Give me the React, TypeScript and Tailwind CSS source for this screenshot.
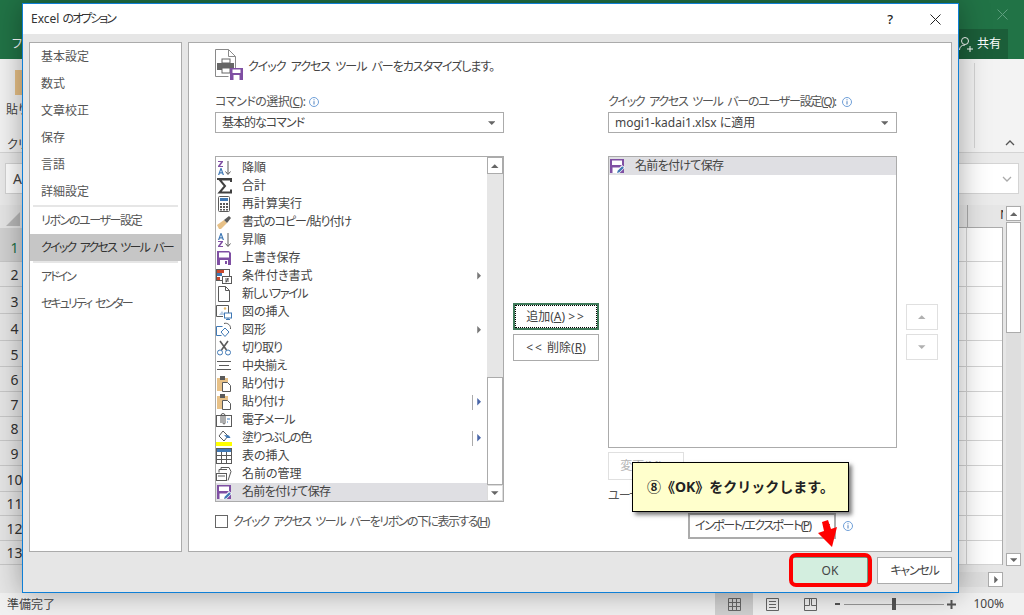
import type { ReactNode } from "react";

const PURPLE = "#7f4fa3";
const BLUE = "#3f78b5";
const GREY = "#5a5a5a";

function Ico({ children, size = 16 }: { children: ReactNode; size?: number }) {
  return (
    <svg viewBox="0 0 16 16" width={size} height={size} className="shrink-0 block" fill="none">
      {children}
    </svg>
  );
}

function SaveAsIcon() {
  return (
    <Ico>
      <rect x="1" y="1" width="14" height="14" fill={PURPLE} />
      <rect x="3" y="2.500" width="10" height="4.500" fill="#fff" />
      <rect x="3.500" y="9.500" width="7" height="5.500" fill="#fff" />
      <path d="M6.500 15.500l1-3 5.500-5.500 3 2.500-5.500 5.500z" fill="#fff" />
      <path d="M8 15l.7-2.200 4.500-4.500 1.700 1.400-4.500 4.500z" fill={BLUE} />
    </Ico>
  );
}

const ICONS: Record<string, ReactNode> = {
  desc: (
    <Ico>
      <path d="M2 1h5v1L4 6h3v1H2V6l3-4H2z" fill={PURPLE} />
      <path d="M4.500 8L2 15h1.300l.5-1.500h2.400l.5 1.500H8L5.500 8zM4.200 12.300L5 10l.8 2.300z" fill={BLUE} />
      <path d="M12 1v13M9.500 11.500L12 14.500l2.500-3" stroke={GREY} />
    </Ico>
  ),
  sum: (
    <Ico>
      <path d="M1 1h14v3M14 1.500H3.500L9 8l-5.500 6.500H15v-3" stroke="#404040" strokeWidth="2" />
    </Ico>
  ),
  calc: (
    <Ico>
      <rect x="2.500" y=".5" width="11" height="15" rx="1" fill="#fff" stroke={GREY} />
      <rect x="4" y="2" width="8" height="3" fill={BLUE} />
      <path d="M4 7h2v2H4zM7 7h2v2H7zM10 7h2v2h-2zM4 10h2v2H4zM7 10h2v2H7zM10 10h2v2h-2zM4 13h2v1.500H4zM7 13h2v1.500H7zM10 13h2v1.500h-2z" fill={GREY} />
    </Ico>
  ),
  brush: (
    <Ico>
      <path d="M1 11l7-5 3 3-6 6H3z" fill="#e8c187" />
      <path d="M8 6l5-4 2 2-4 5z" fill={GREY} />
    </Ico>
  ),
  asc: (
    <Ico>
      <path d="M4.500 1L2 8h1.300l.5-1.500h2.400L6.700 8H8L5.500 1zM4.200 5.300L5 3l.8 2.300z" fill={BLUE} />
      <path d="M2 9h5v1l-3 4h3v1H2v-1l3-4H2z" fill={PURPLE} />
      <path d="M12 1v13M9.500 11.500L12 14.500l2.500-3" stroke={GREY} />
    </Ico>
  ),
  save: (
    <Ico>
      <path d="M1 1h12l2 2v12H1z" fill={PURPLE} />
      <rect x="3" y="2.500" width="10" height="5" fill="#fff" />
      <rect x="4" y="10" width="8" height="5" fill="#fff" />
      <rect x="9" y="11" width="2" height="3" fill={PURPLE} />
    </Ico>
  ),
  cond: (
    <Ico>
      <rect x=".5" y="1.500" width="13" height="11" fill="#fff" stroke={GREY} />
      <rect x="1" y="2" width="7" height="3" fill="#c9482c" />
      <rect x="1" y="5" width="5" height="3" fill={BLUE} />
      <rect x="1" y="9" width="3" height="3" fill="#c9482c" />
      <rect x="6.500" y="8.500" width="9" height="7" fill="#fff" stroke={GREY} />
      <path d="M9 11h4M9 13h4M12 10l-2 4.500" stroke="#333" strokeWidth=".8" />
    </Ico>
  ),
  file: (
    <Ico>
      <path d="M2.500.5h7l4 4v11h-11z" fill="#fff" stroke={GREY} />
      <path d="M9.500.5v4h4" stroke={GREY} />
    </Ico>
  ),
  picture: (
    <Ico>
      <path d="M.5 1.500h12v8M7 12.500H.5v-11" stroke={GREY} />
      <path d="M3 11l3-4 3 4z" fill="#b7cbe3" />
      <circle cx="9" cy="4.500" r="1.200" fill="#e8b96a" />
      <rect x="8.500" y="9" width="7" height="5" fill="#fff" stroke={BLUE} />
      <path d="M10 15.500h4M12 14v1.500" stroke={BLUE} />
    </Ico>
  ),
  shape: (
    <Ico>
      <path d="M.5 4.500h6M.5 4.500v9h5" stroke={BLUE} />
      <path d="M5 10l4-4 4 4-4 4.500z" fill="#fff" stroke={BLUE} />
      <path d="M8 1.500a5 5 0 0 1 6.500 5.500" stroke={GREY} />
    </Ico>
  ),
  cut: (
    <Ico>
      <path d="M4 1l6.500 9M12 1L5.500 10" stroke={GREY} strokeWidth="1.600" />
      <circle cx="4" cy="12.500" r="2.500" stroke={BLUE} />
      <circle cx="12" cy="12.500" r="2.500" stroke={BLUE} />
    </Ico>
  ),
  center: (
    <Ico>
      <path d="M1 3.500h14M3 7.500h10M1 11.500h14" stroke={GREY} />
    </Ico>
  ),
  paste: (
    <Ico>
      <rect x="1" y="2" width="11" height="13" fill="#e8c187" />
      <rect x="4" y="0" width="5" height="4" fill={GREY} />
      <path d="M6.500 6.500h5l3 3v6h-8z" fill="#fff" stroke={GREY} />
    </Ico>
  ),
  mail: (
    <Ico>
      <rect x=".5" y="3.500" width="15" height="11" fill="#fff" stroke={GREY} />
      <path d="M5 11V3.500a2 2 0 0 1 4 0V11a1 1 0 0 1-2 0V4" stroke={GREY} />
      <path d="M11 7h3M11 10h1" stroke={BLUE} />
    </Ico>
  ),
  fill: (
    <Ico>
      <path d="M7 1l5 5-4 5-5-5z" fill="#fff" stroke={GREY} />
      <path d="M8 5l5 .5 1.500 2.500H11z" fill={BLUE} />
      <rect x="0" y="12" width="16" height="4" fill="#ffff00" />
    </Ico>
  ),
  table: (
    <Ico>
      <rect x=".5" y=".5" width="15" height="15" fill="#fff" stroke={GREY} />
      <rect x="1" y="1" width="14" height="3" fill={BLUE} />
      <path d="M1 7.500h14M1 11.500h14M5.500 4v11M10.500 4v11" stroke={GREY} />
    </Ico>
  ),
  names: (
    <Ico>
      <path d="M3 6.500V3.500h8M5 3.500V1.500h8l2 4-3 9" stroke={GREY} />
      <rect x=".5" y="7.500" width="10" height="7" fill="#fff" stroke={GREY} />
      <path d="M2 10h7" stroke={GREY} />
    </Ico>
  ),
  saveas: <SaveAsIcon />,
};

// tr: the reference's kana run narrower than Noto's, so each label gets its own tracking
const COMMANDS: { label: string; icon: string; tr?: string; arrow?: "plain" | "split"; active?: boolean }[] = [
  { label: "降順", icon: "desc" },
  { label: "合計", icon: "sum" },
  { label: "再計算実行", icon: "calc" },
  { label: "書式のコピー/貼り付け", icon: "brush", tr: "tracking-[-1px]" },
  { label: "昇順", icon: "asc" },
  { label: "上書き保存", icon: "save" },
  { label: "条件付き書式", icon: "cond", arrow: "plain" },
  { label: "新しいファイル", icon: "file", tr: "tracking-[-1.4px]" },
  { label: "図の挿入", icon: "picture" },
  { label: "図形", icon: "shape", arrow: "plain" },
  { label: "切り取り", icon: "cut", tr: "tracking-[-1px]" },
  { label: "中央揃え", icon: "center", tr: "tracking-[-0.5px]" },
  { label: "貼り付け", icon: "paste", tr: "tracking-[-0.8px]" },
  { label: "貼り付け", icon: "paste", tr: "tracking-[-0.8px]", arrow: "split" },
  { label: "電子メール", icon: "mail", tr: "tracking-[-1px]" },
  { label: "塗りつぶしの色", icon: "fill", tr: "tracking-[-1.4px]", arrow: "split" },
  { label: "表の挿入", icon: "table" },
  { label: "名前の管理", icon: "names" },
  { label: "名前を付けて保存", icon: "saveas", tr: "tracking-[-0.7px]", active: true },
];

const ROW_NUMS = [
  [1, "h-[34px]"],
  [2, "h-[25px]"],
  [3, "h-[27px]"],
  [4, "h-[27px]"],
  [5, "h-[26px]"],
  [6, "h-[25px]"],
  [7, "h-[25px]"],
  [8, "h-[24px]"],
  [9, "h-[25px]"],
  [10, "h-[26px]"],
  [11, "h-[24px]"],
  [12, "h-[25px]"],
  [13, "h-[24px]"],
] as const;

const NAV_TOP = ["基本設定", "数式", "文章校正", "保存", "言語", "詳細設定"];

function Tri({ dir, color, size = 3 }: { dir: "up" | "down" | "right"; color: string; size?: number }) {
  const pts = dir === "up" ? "0,8 5,3 10,8" : dir === "down" ? "0,3 5,8 10,3" : "3,0 8,5 3,10";
  return (
    <svg viewBox="0 0 10 10" width={size * 2.5} height={size * 2.5} className="block shrink-0">
      <polygon points={pts} fill={color} />
    </svg>
  );
}

function Info() {
  return (
    <svg viewBox="0 0 10 10" width="10" height="10" className="block shrink-0">
      <circle cx="5" cy="5" r="4.500" fill="none" stroke="#6f9fd8" />
      <path d="M5 4.200v3.300M5 2.300v1" stroke="#4c7fbd" />
    </svg>
  );
}

function Select({ text, tr = "" }: { text: string; tr?: string }) {
  return (
    <div className="h-[21px] border border-[#ababab] bg-white flex items-center pl-[6px] pr-[8px] justify-between text-[#444]">
      <span className={tr}>{text}</span>
      <Tri dir="down" color="#666" />
    </div>
  );
}

function ScrollBtn({ dir, className = "" }: { dir: "up" | "down" | "right"; className?: string }) {
  return (
    <div className={`flex items-center justify-center bg-white border border-[#ababab] ${className}`}>
      <Tri dir={dir} color="#666" />
    </div>
  );
}

function CommandList() {
  return (
    <div className="h-[346px] border border-[#ababab] bg-white flex">
      <div className="flex-1 flex flex-col min-w-0 pt-[2px]">
        {COMMANDS.map((c, i) => (
          <div key={i} className={`flex-1 flex items-center ${c.active ? "bg-[#dfdfe3]" : ""}`}>
            <span className="w-[26px] shrink-0">{ICONS[c.icon]}</span>
            <span className={`flex-1 text-[#444] ${c.tr ?? ""}`}>{c.label}</span>
            {c.arrow === "split" && <span className="w-px h-[15px] bg-[#ababab] mr-[2px]" />}
            {c.arrow && (
              <span className="mr-[5px]">
                <Tri dir="right" color={c.arrow === "split" ? "#4a66a8" : "#777"} />
              </span>
            )}
            {!c.arrow && <span className="w-[14px]" />}
          </div>
        ))}
      </div>
      <div className="w-[16px] bg-[#e6e6e6] flex flex-col">
        <ScrollBtn dir="up" className="h-[17px]" />
        <div className="h-[203px]" />
        <div className="flex-1 bg-white border border-[#ababab]" />
        <ScrollBtn dir="down" className="h-[16px] border-[#dcdcdc]" />
      </div>
    </div>
  );
}

function HeaderIcon() {
  return (
    <svg viewBox="0 0 28 31" width="28" height="31" className="block shrink-0" fill="none">
      <path d="M.5.500h13l7 7v15M.5.500v27h13" stroke="#8a8a8a" />
      <path d="M13.500.500v7h7" stroke="#8a8a8a" />
      <rect x="7" y="10" width="8" height="4" fill="#fff" stroke="#666" />
      <rect x="2" y="14" width="17" height="7" fill="#666" />
      <rect x="7" y="19" width="8" height="5" fill="#fff" stroke="#666" />
      <rect x="15" y="19" width="13" height="12" fill={PURPLE} />
      <rect x="17.500" y="20.500" width="8" height="3.500" fill="#fff" />
      <rect x="18.500" y="26" width="6" height="5" fill="#fff" />
    </svg>
  );
}

function Excel() {
  return (
    <div className="h-full flex flex-col text-[#444]">
      <div className="h-[59px] bg-[#217346] text-white flex flex-col">
        <div className="h-[29px] flex justify-end items-center pr-[16px]">
          <svg width="11" height="11" viewBox="0 0 11 11">
            <path d="M.5.500l10 10M10.500.500l-10 10" stroke="#5f9f7f" />
          </svg>
        </div>
        <div className="h-[30px] flex items-center pl-[12px]">
          <span>ファイル</span>
          <div className="ml-auto mr-[16px] w-[50px] h-full bg-[#1b5e39] flex items-center pl-[1px] gap-[4px]">
            <svg width="14" height="16" viewBox="0 0 14 16" fill="none" stroke="#fff" className="shrink-0">
              <circle cx="6" cy="5" r="3.500" />
              <path d="M.5 14c0-3 2-5 5.500-5M8 13h6M11 10v6" />
            </svg>
            <span>共有</span>
          </div>
        </div>
      </div>

      <div className="h-[94px] bg-[#f3f3f3] border-b border-[#d4d4d4] flex justify-between pl-[6px] pr-[9px]">
        <div className="flex flex-col">
          <div className="mt-[11px] ml-[9px] w-[20px] h-[25px] bg-[#e8c187]" />
          <span className="mt-[9px]">貼り付け</span>
          <span className="mt-[23px] ml-px">クリップボード</span>
        </div>
        <div className="flex items-end gap-[30px] pb-[4px]">
          <div className="w-px h-[85px] bg-[#d4d4d4]" />
          <svg width="10" height="6" viewBox="0 0 10 6" fill="none" className="mb-[2px]">
            <path d="M1 5l4-4 4 4" stroke="#555" strokeWidth="1.300" />
          </svg>
        </div>
      </div>

      <div className="h-[52px] bg-[#ebebeb] pl-[5px] pr-[5px] pt-[10px]">
        <div className="h-[31px] bg-white border border-[#d4d4d4] flex items-center justify-between pl-[7px] pr-[6px]">
          <span className="text-[14px]">A</span>
          <svg width="10" height="6" viewBox="0 0 10 6" fill="none">
            <path d="M1 1l4 4 4-4" stroke="#aaa" strokeWidth="1.300" />
          </svg>
        </div>
      </div>

      <div className="flex-1 flex min-h-0 bg-[#e6e6e6]">
        <div className="w-[22px] shrink-0 flex flex-col text-[14px] text-[#333]">
          <div className="h-[23px] flex items-end justify-end p-[2px]">
            <svg width="14" height="14" viewBox="0 0 14 14">
              <polygon points="14,0 14,14 0,14" fill="#b9b9b9" />
            </svg>
          </div>
          {ROW_NUMS.map(([n, h]) => (
            <div
              key={n}
              className={`${h} border-b border-[#c8c8c8] flex items-end justify-center pl-[7px] leading-none ${n === 1 ? "pb-[6px] bg-[#d2d2d2] text-[#217346]" : "pb-[4px]"}`}
            >
              {n}
            </div>
          ))}
        </div>

        <div className="flex-1 flex flex-col min-w-0">
          <div className="h-[23px] flex border-b border-[#ababab]">
            <div className="flex-1 border-r border-[#ababab]" />
            <div className="w-[35px] flex justify-end items-center overflow-hidden pb-[4px] text-[13px] text-[#333]">
              <span className="translate-x-[7px]">N</span>
            </div>
          </div>
          <div className="border-r border-[#ababab] bg-white">
            {ROW_NUMS.map(([n, h]) => (
              <div key={n} className={`${h} flex border-b border-[#d4d4d4]`}>
                <div className="flex-1 border-r border-[#d4d4d4]" />
                <div className="w-[35px]" />
              </div>
            ))}
          </div>
          <div className="mt-[7px] h-[15px] bg-[#dedede] flex justify-end">
            <ScrollBtn dir="right" className="w-[15px]" />
          </div>
        </div>

        <div className="w-[21px] shrink-0 pl-[3px] pr-[3px] pt-[1px] flex flex-col">
          <ScrollBtn dir="up" className="h-[15px]" />
          <div className="h-[111px] bg-white border border-[#ababab] mt-px" />
          <div className="h-[220px] bg-[#dedede]" />
          <ScrollBtn dir="down" className="h-[13px]" />
        </div>
      </div>

      <div className="h-[22px] bg-[#f1f1f1] flex items-center pl-[7px] text-[#444]">
        <span className="pt-[2px]">準備完了</span>
        <div className="ml-auto h-full flex items-center pr-[20px]">
          <div className="w-[38px] h-full bg-[#d0d0d0] flex items-center justify-center">
            <svg width="13" height="13" viewBox="0 0 13 13" fill="none" stroke="#666">
              <path d="M.5.500h12v12H.5zM4.500.500v12M8.500.500v12M.5 4.500h12M.5 8.500h12" />
            </svg>
          </div>
          <div className="w-[38px] flex justify-center">
            <svg width="13" height="13" viewBox="0 0 13 13" fill="none" stroke="#666">
              <path d="M.5.500h12v12H.5zM3 3.500h7M3 6.500h7M3 9.500h7" />
            </svg>
          </div>
          <div className="w-[38px] flex justify-center">
            <svg width="13" height="13" viewBox="0 0 13 13" fill="none" stroke="#666">
              <path d="M.5.500h12v12H.5zM.5 7.500h5v-7M7.500.500v7h5" />
            </svg>
          </div>
          <div className="w-[5px] h-[2px] bg-[#555] ml-[6px]" />
          <div className="w-[100px] h-px bg-[#999] ml-[4px] mr-[3px] flex items-center justify-center">
            <div className="w-[4px] h-[12px] bg-[#555] shrink-0" />
          </div>
          <svg width="9" height="9" viewBox="0 0 9 9" stroke="#555" strokeWidth="2" className="mr-[17px]">
            <path d="M0 4.500h9M4.500 0v9" />
          </svg>
          <span>100%</span>
        </div>
      </div>
    </div>
  );
}

function Dialog() {
  return (
    <div className="absolute left-[22px] top-[3px] w-[937px] h-[590px] border border-[#0f7fd6] bg-[#e6e6e6] flex flex-col shadow-[0_0_28px_rgba(0,0,0,0.35)]">
      <div className="h-[30px] shrink-0 bg-white flex items-center pl-[8px] text-[#333]">
        <span>
          Excel <span className="tracking-[-2px]">のオプション</span>
        </span>
        <span className="ml-auto mr-[37px] text-[13px] font-medium text-[#222]">?</span>
        <svg width="11" height="11" viewBox="0 0 11 11" className="mr-[17px]">
          <path d="M.5.500l10 10M10.500.500l-10 10" stroke="#222" />
        </svg>
      </div>

      <div className="flex-1 flex gap-[6px] px-[6px] pt-[8px] min-h-0">
        <div className="w-[153px] shrink-0 border border-[#ababab] bg-white flex flex-col text-[#555]">
          {NAV_TOP.map((t) => (
            <div key={t} className="h-[27px] flex items-center pl-[11px]">{t}</div>
          ))}
          <div className="h-[2px] bg-[#e6e6e6] mx-[3px]" />
          <div className="h-[27px] flex items-center pl-[11px] tracking-[-1.4px]">リボンのユーザー設定</div>
          <div className="h-[27px] flex items-center pl-[11px] bg-[#c6c6c6] text-[#333] tracking-[-1.8px] [word-spacing:3px]">クイック アクセス ツール バー</div>
          <div className="h-[2px] bg-[#e6e6e6] mx-[3px]" />
          <div className="h-[26px] pt-[2px] flex items-center pl-[11px] tracking-[-2px]">アドイン</div>
          <div className="h-[27px] pt-[2px] flex items-center pl-[11px] tracking-[-2px] [word-spacing:3px]">セキュリティ センター</div>
        </div>

        <div className="flex-1 border border-[#ababab] bg-white flex flex-col pl-[26px] pt-[6px] text-[#555]">
          <div className="h-[43px] flex items-start gap-[5px]">
            <HeaderIcon />
            <span className="mt-[12px] text-[#444] tracking-[-1px] [word-spacing:3px]">クイック アクセス ツール バーをカスタマイズします。</span>
          </div>

          <div className="flex">
            <div className="w-[289px] flex flex-col">
              <div className="h-[20px] flex items-center gap-[4px]">
                <span className="tracking-[-0.5px]">コマンドの選択(<u>C</u>):</span>
                <Info />
              </div>
              <Select text="基本的なコマンド" tr="tracking-[-1px]" />
              <div className="h-[23px]" />
              <CommandList />
              <div className="mt-[13px] flex items-center gap-[5px]">
                <div className="w-[13px] h-[13px] border border-[#666] bg-white" />
                <span className="tracking-[-1.5px] [word-spacing:3px]">クイック アクセス ツール バーをリボンの下に表示する(<u>H</u>)</span>
              </div>
            </div>

            <div className="w-[86px] mx-[9px] pt-[211px] flex flex-col gap-[4px] text-[#444]">
              <div className="h-[27px] border-2 border-[#3f7a5a] flex items-center justify-center outline-1 outline-dotted outline-black -outline-offset-3">
                追加(<u>A</u>)&nbsp;<span className="tracking-[2px]">&gt;&gt;</span>
              </div>
              <div className="h-[27px] border border-[#ababab] flex items-center justify-center">
                <span className="tracking-[2px]">&lt;&lt;</span>&nbsp;削除(<u>R</u>)
              </div>
            </div>

            <div className="w-[289px] flex flex-col">
              <div className="h-[20px] flex items-center gap-[6px]">
                <span className="tracking-[-1.3px] [word-spacing:3px]">クイック アクセス ツール バーのユーザー設定(<u>Q</u>):</span>
                <Info />
              </div>
              <Select text="mogi1-kadai1.xlsx に適用" />
              <div className="h-[23px]" />
              <div className="h-[292px] border border-[#ababab] bg-white">
                <div className="h-[18px] bg-[#dfdfe3] flex items-center gap-[10px] text-[#444]">
                  <SaveAsIcon />
                  <span className="tracking-[-0.7px]">名前を付けて保存</span>
                </div>
              </div>
              <div className="mt-[4px] w-[76px] h-[28px] border border-[#e0e0e0] flex items-center justify-center text-[#b5b5b5]">
                変更(M)...
              </div>
              <div className="mt-[8px] h-[16px] flex items-center tracking-[-1px]">ユーザー設定:</div>
              <div className="mt-[9px] flex items-center">
                <div className="ml-[80px] w-[148px] h-[26px] border-2 border-[#ababab] flex items-center justify-between pl-[5px] pr-[4px] text-[#444]">
                  <span className="tracking-[-1.5px]">インポート/エクスポート(<u>P</u>)</span>
                  <Tri dir="down" color="#444" />
                </div>
                <span className="ml-[7px]">
                  <Info />
                </span>
              </div>
            </div>

            <div className="w-[32px] ml-[9px] pt-[212px] flex flex-col gap-[4px]">
              <div className="h-[26px] border border-[#e0e0e0] flex items-center justify-center">
                <Tri dir="up" color="#b0b0b0" />
              </div>
              <div className="h-[26px] border border-[#e0e0e0] flex items-center justify-center">
                <Tri dir="down" color="#b0b0b0" />
              </div>
            </div>
          </div>
        </div>
      </div>

      <div className="h-[40px] shrink-0 flex justify-end items-start gap-[9px] px-[6px] pt-[5px] text-[#444]">
        <div className="w-[76px] h-[27px] bg-[#d3eedf] border border-[#6f9c86] flex items-center justify-center">OK</div>
        <div className="w-[75px] h-[27px] bg-white border border-[#ababab] flex items-center justify-center tracking-[-1.2px]">キャンセル</div>
      </div>
    </div>
  );
}

export default function App() {
  return (
    <div className="relative w-[1024px] h-[615px] overflow-hidden bg-white text-[12px] leading-none whitespace-nowrap [font-family:'Noto_Sans','Noto_Sans_CJK_JP',sans-serif] [font-feature-settings:'palt']">
      <Excel />
      <Dialog />

      {/* 吹き出しと赤い強調 */}
      <div className="absolute left-[632px] top-[462px] w-[217px] h-[50px] bg-[#ffffcc] border border-black shadow-[3px_3px_4px_rgba(0,0,0,0.5)] flex items-center justify-center font-bold text-[14px] text-[#222] [font-feature-settings:normal]">
        ⑧《OK》をクリックします。
      </div>
      <div className="absolute left-[789px] top-[553px] w-[83px] h-[34px] border-[4px] border-[#ff0000] rounded-[7px]" />
      <svg className="absolute left-[815px] top-[519px]" width="24" height="30" viewBox="0 0 24 30">
        <path d="M7 3l6-2 3 9 6-2-5 20L3 14l6-2z" fill="#ff0000" />
      </svg>
    </div>
  );
}
